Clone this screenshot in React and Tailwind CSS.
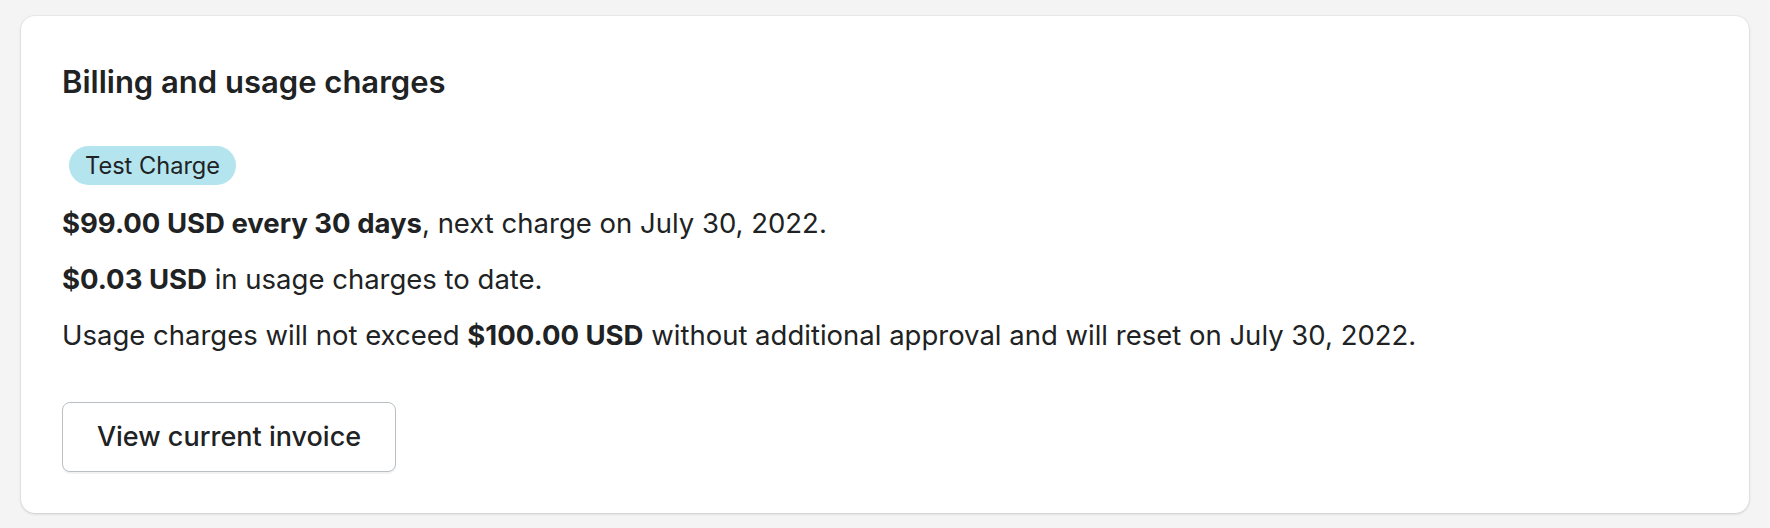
export default function App() {
  return (
    <div className="min-h-[528px] w-full bg-[#f4f4f4] px-[21px] pt-[16px]" style={{ fontFamily: 'Inter, "Noto Sans", sans-serif' }}>
      <div className="h-[497px] rounded-[14px] bg-white pl-[41px] pr-[41px] pt-[46px] shadow-[0_1px_3px_rgba(0,0,0,0.15),0_0_0_1px_rgba(0,0,0,0.03)]">
        <h2 className="text-[31px] font-semibold leading-[40px] text-[#202223]">Billing and usage charges</h2>
        <div className="mt-[44px] flex">
          <span className="ml-[7px] inline-flex h-[39px] items-center rounded-full bg-[#b4e5ef] px-[16px] text-[23.6px] text-[#202223]">Test Charge</span>
        </div>
        <div className="mt-[23px] flex flex-col gap-[26px] text-[27.5px] leading-[30px] text-[#202223]">
          <p><b className="font-bold">$99.00 USD every 30 days</b>, next charge on July 30, 2022.</p>
          <p><b className="font-bold">$0.03 USD</b> in usage charges to date.</p>
          <p>Usage charges will not exceed <b className="font-bold">$100.00 USD</b> without additional approval and will reset on July 30, 2022.</p>
        </div>
        <button className="mt-[52px] h-[70px] w-[334px] rounded-[8px] border border-[#babfc3] bg-white text-[27px] font-medium text-[#202223] shadow-[0_2px_0_rgba(0,0,0,0.05)]">View current invoice</button>
      </div>
    </div>
  );
}
